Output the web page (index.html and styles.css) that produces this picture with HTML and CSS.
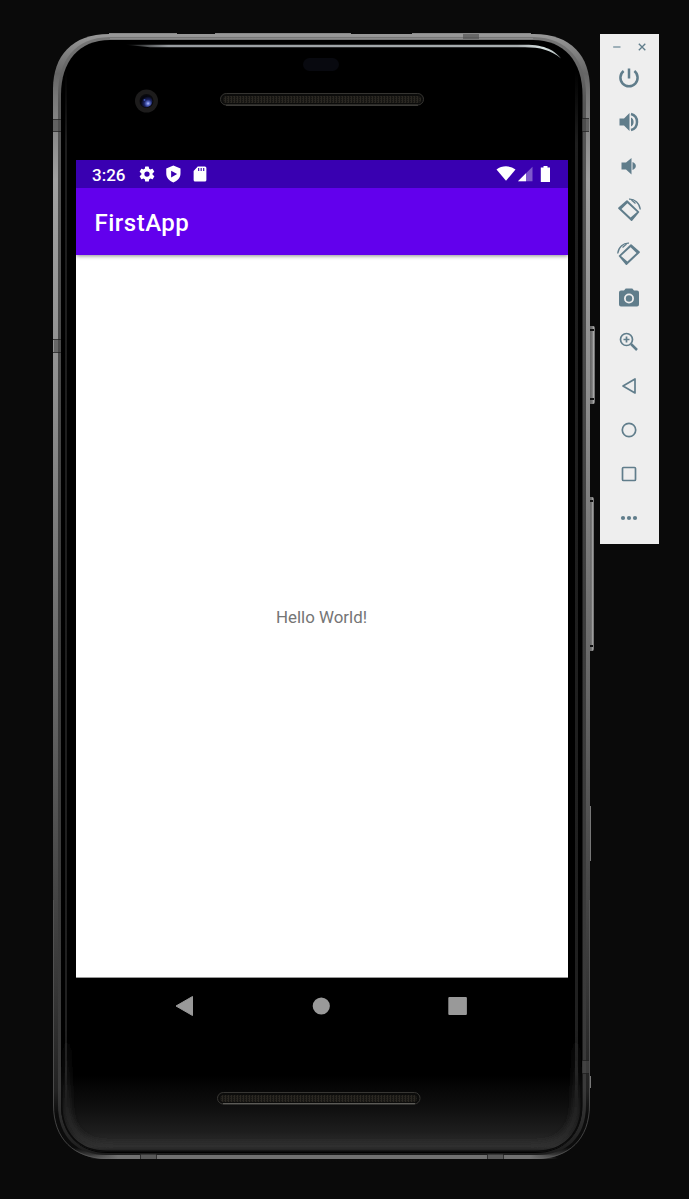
FILE: index.html
```html
<!DOCTYPE html>
<html lang="en">
<head>
<meta charset="utf-8">
<title>Android Emulator</title>
<link rel="stylesheet" href="styles.css">
</head>
<body>
<main class="desktop">
  <section class="phone">
    <svg class="frame" viewBox="53 33 545 1130" aria-hidden="true">
      <defs>
        <linearGradient id="rim" x1="0" y1="0" x2="0" y2="1">
          <stop offset="0" stop-color="#999"/><stop offset=".035" stop-color="#666"/>
          <stop offset=".055" stop-color="#777"/><stop offset=".13" stop-color="#a0a0a0"/>
          <stop offset=".32" stop-color="#8e8e8e"/><stop offset=".6" stop-color="#636363"/>
          <stop offset=".85" stop-color="#363636"/><stop offset=".94" stop-color="#222"/><stop offset=".96" stop-color="#0c0c0c"/>
          <stop offset=".99" stop-color="#0c0c0c"/><stop offset="1" stop-color="#555"/>
        </linearGradient>
        <linearGradient id="rimIn" x1="0" y1="0" x2="0" y2="1">
          <stop offset="0" stop-color="#777"/><stop offset=".06" stop-color="#555"/>
          <stop offset=".5" stop-color="#3c3c3c"/><stop offset=".94" stop-color="#3a3a3a"/><stop offset="1" stop-color="#1c1c1c"/>
        </linearGradient>
        <linearGradient id="base" x1="0" x2="1">
          <stop offset="0" stop-color="#666" stop-opacity="0"/><stop offset=".06" stop-color="#707070"/>
          <stop offset=".94" stop-color="#707070"/><stop offset="1" stop-color="#666" stop-opacity="0"/>
        </linearGradient>
        <linearGradient id="chin" x1="0" y1="0" x2="0" y2="1">
          <stop offset="0" stop-color="#000"/><stop offset=".45" stop-color="#101010"/>
          <stop offset=".75" stop-color="#1e1e1e"/><stop offset=".93" stop-color="#303030"/><stop offset="1" stop-color="#181818"/>
        </linearGradient>
        <linearGradient id="shine" gradientUnits="userSpaceOnUse" x1="125" y1="0" x2="561" y2="0">
          <stop offset="0" stop-color="#b4b9bc" stop-opacity="0"/><stop offset=".1" stop-color="#989ca0"/>
          <stop offset=".9" stop-color="#a9afb1"/><stop offset=".96" stop-color="#d8e2e2"/><stop offset="1" stop-color="#aab4b4"/>
        </linearGradient>
        <linearGradient id="key" x1="0" x2="1">
          <stop offset="0" stop-color="#555"/><stop offset=".6" stop-color="#777"/><stop offset=".8" stop-color="#aaa"/><stop offset="1" stop-color="#555"/>
        </linearGradient>
        <linearGradient id="fade" x1="0" y1="0" x2="0" y2="1">
          <stop offset="0" stop-color="#222" stop-opacity="0"/><stop offset=".07" stop-color="#222"/>
          <stop offset=".96" stop-color="#262626"/><stop offset="1" stop-color="#262626" stop-opacity="0"/>
        </linearGradient>
        <linearGradient id="cornerGlow" gradientUnits="userSpaceOnUse" x1="0" y1="1030" x2="0" y2="1110">
          <stop offset="0" stop-color="#2b2b2b" stop-opacity="0"/><stop offset="1" stop-color="#2d2d2d"/>
        </linearGradient>
        <radialGradient id="lens" cx=".65" cy=".68" r=".6">
          <stop offset="0" stop-color="#b3c0ff"/><stop offset=".25" stop-color="#5668c4"/>
          <stop offset=".55" stop-color="#1a2260"/><stop offset="1" stop-color="#05060f"/>
        </radialGradient>
        <pattern id="mesh" width="3" height="2" patternUnits="userSpaceOnUse">
          <rect width="3" height="2" fill="#171613"/><rect width="1" height="2" fill="#2b2822"/><rect x="2" width="1" height="1" fill="#24221e"/>
        </pattern>
        <filter id="soft" x="-10%" y="-10%" width="120%" height="120%"><feGaussianBlur stdDeviation="3"/></filter>
        <clipPath id="glassClip"><path d="M110 41H533Q582 41 582 96V1105C582 1133 565 1152 536 1152H107C78 1152 61 1133 61 1105V96Q61 41 110 41Z"/></clipPath>
      </defs>

      <!-- side keys -->
      <rect x="588" y="326" width="7" height="78" rx="2" fill="url(#key)"/>
      <path d="M590 330H594M590 399H594" stroke="#111" stroke-width="2"/>
      <rect x="588" y="497" width="6" height="154" rx="2" fill="url(#key)"/>
      <path d="M589 501H593M589 646H593" stroke="#111" stroke-width="2"/>
      <path d="M590.5 806V861M590.5 1076V1088" stroke="#777"/>

      <!-- metal rim -->
      <path d="M109 34C72 34 53 56 53 89V1105C53 1139 74 1159 107 1159H536C569 1159 590 1139 590 1105V89C590 56 571 34 534 34Z" fill="url(#rim)"/>
      <path d="M109 33.5H177M215 33.5H351M412 33.5H531" stroke="#888"/>
      <path d="M109 37C75 38 58 60 58 95V1105C58 1138 78 1155 107 1155H536C566 1155 586 1138 586 1105V95C586 60 567 38 534 37Z" fill="url(#rimIn)"/>
      <path d="M110 40C79 40 61 61 61 95V1105C61 1134 79 1153 108 1153H535C564 1153 582.500 1134 582.500 1105V95C582.500 61 564 40 533 40Z" fill="#000"/>
      <path d="M110 38.500H533" stroke="#8b8b8b"/>
      <path d="M53.500 900V1105C53.500 1139 74 1158.500 107 1158.500M536 1158.500C569 1158.500 589.500 1139 589.500 1105V900" fill="none" stroke="#5a5a5a" stroke-width=".7"/>
      <rect x="90" y="1155" width="468" height="4" fill="url(#base)"/>
      <path d="M53 120H61V131H53ZM54 340H61V352H54ZM582 119H589V131H582ZM463 34H479V39H463ZM582 1061H589V1073H582ZM140 1154H156V1159H140ZM487 1154H503V1159H487Z" fill="#4a4a4a" fill-opacity=".6"/>
      <path d="M53 119.500H61M53 131.500H61M53 339.500H61M53 352.500H61M582 118.500H589M582 131.500H589M582 1060.500H589M582 1073.500H589M140.500 1154V1159M156.500 1154V1159M487.500 1154V1159M503.500 1154V1159" stroke="#222" stroke-opacity=".8"/>

      <!-- glass -->
      <g clip-path="url(#glassClip)">
        <rect x="61" y="1075" width="521" height="77" fill="url(#chin)"/>
        <rect x="65" y="70" width="2" height="1046" fill="url(#fade)" opacity=".85"/>
        <rect x="575" y="70" width="3" height="1046" fill="url(#fade)" opacity=".85"/>
        <path d="M67 1030V1102C67 1130 81 1146 111 1146H533C562 1146 576 1130 576 1102V1030" fill="none" stroke="url(#cornerGlow)" stroke-width="5" filter="url(#soft)"/>
        <path d="M61 1090V1105C61 1133 78 1152 107 1152H536C565 1152 582 1133 582 1105V1090" fill="none" stroke="#0b0b0b" stroke-width="3"/>
      </g>
      <path d="M125 44.800H525C546 44.800 555 51 561 58.500C551 50 540 47.200 525 47.200H150Z" fill="url(#shine)"/>

      <!-- sensor, camera, speakers -->
      <rect x="303" y="58" width="36" height="13" rx="6.500" fill="#08090f"/>
      <circle cx="146.500" cy="101" r="11.500" fill="#1d1c1c"/>
      <circle cx="146.500" cy="101" r="7" fill="#0a0a0e"/>
      <circle cx="146.300" cy="101.300" r="6" fill="url(#lens)"/>
      <circle cx="144.500" cy="100" r="1" fill="#3d53b0"/>
      <rect x="220.500" y="93.500" width="203" height="11.500" rx="5.700" fill="#0c0c0b" stroke="#353431"/>
      <rect x="223" y="96" width="198" height="7" rx="3.500" fill="url(#mesh)"/>
      <path d="M226 105.200H418" stroke="#4a4946"/>
      <rect x="217.500" y="1092.500" width="202.500" height="11.500" rx="5.700" fill="#0c0c0b" stroke="#373633"/>
      <rect x="220" y="1095" width="197" height="7" rx="3.500" fill="url(#mesh)"/>
      <path d="M223 1103.700H415" stroke="#6a6966"/>
    </svg>

    <div class="screen">
      <header class="statusbar">
        <span class="clock">3:26</span>
        <svg class="status-icon" viewBox="0 0 24 24"><path d="M19.400 13a7.500 7.500 0 0 0 0-2l2.100-1.600a.5.500 0 0 0 .1-.6l-2-3.500a.5.500 0 0 0-.6-.2l-2.500 1a7.300 7.300 0 0 0-1.700-1L14.400 2.500a.5.500 0 0 0-.5-.5h-4a.5.500 0 0 0-.5.500L9.100 5.100a7.300 7.300 0 0 0-1.700 1l-2.500-1a.5.500 0 0 0-.6.200l-2 3.500a.5.500 0 0 0 .1.600L4.500 11a8 8 0 0 0 0 2l-2.100 1.600a.5.500 0 0 0-.1.600l2 3.500c.1.200.4.300.6.200l2.500-1a7.300 7.300 0 0 0 1.700 1l.4 2.600c0 .3.200.5.500.5h4c.2 0 .5-.2.500-.5l.4-2.600a7.300 7.300 0 0 0 1.700-1l2.500 1c.2.100.5 0 .6-.2l2-3.500a.5.500 0 0 0-.1-.6ZM12 15.500a3.500 3.500 0 1 1 0-7 3.500 3.500 0 0 1 0 7Z"/></svg>
        <svg class="status-icon" viewBox="0 0 24 24"><path fill-rule="evenodd" d="M12.500.8 3 4.500V11c0 6 4 10.300 9.500 12.300 5.500-2 9.500-6.300 9.500-12.300V4.500ZM9.500 7.500l8 4.500-8 4.500Z"/></svg>
        <svg class="status-icon card" viewBox="0 0 24 24"><path fill-rule="evenodd" d="M9 2H18.500a2 2 0 0 1 2 2V20a2 2 0 0 1-2 2H5.500a2 2 0 0 1-2-2V8ZM9.500 4V8H11V4ZM12.800 4V8H14.300V4ZM16.200 4V8H17.700V4Z"/></svg>
        <svg class="signals" viewBox="0 0 56 18"><path d="M.5 4.500C6 .3 14 .3 19.500 4.500L10 15.800Z"/><path d="M22 16.300 36.500 1.800V16.300Z" opacity=".35"/><path d="M22 16.300 30 8.300V16.300Z"/><path d="M44.800 2.500H47.500V1H51.500V2.500H54V17H44.800Z"/></svg>
      </header>
      <h1 class="appbar">FirstApp</h1>
      <div class="content">Hello World!</div>
      <nav class="navbar">
        <svg viewBox="0 0 20 20"><path d="M2 10 18.500.5V19.500Z" stroke="#999" stroke-linejoin="round"/></svg>
        <svg viewBox="0 0 20 20"><circle cx="10.300" cy="10" r="8.600"/></svg>
        <svg viewBox="0 0 20 20"><rect x=".3" y="1" width="18.600" height="18" rx="1"/></svg>
      </nav>
    </div>
  </section>

  <aside class="toolbar">
    <div class="window-controls">
      <svg viewBox="0 0 10 10"><path d="M1.200 5H8.500" stroke="#93a7b1" stroke-width="1.800"/></svg>
      <svg viewBox="0 0 10 10"><path d="M1.800 1.800 8.300 8.300M8.300 1.800 1.800 8.300" stroke="#607d8b" stroke-width="1.300"/></svg>
    </div>
    <svg class="tool" viewBox="0 0 24 24"><path class="line thick" d="M12 2.500V12.500M6.600 5A8.600 8.600 0 1 0 17.400 5"/></svg>
    <svg class="tool" viewBox="0 0 24 24"><path d="M2.500 8.500H7L12.500 3V21L7 15.500H2.500ZM14 7.500C17.500 9 17.500 15 14 16.500Z"/><path class="line thick" d="M14 4C22 6 22 18 14 20"/></svg>
    <svg class="tool" viewBox="0 0 24 24"><path d="M4.500 8.500H9L14.500 4V20.500L9 15.500H4.500ZM15.500 8C20 9.500 20 14.500 15.500 16Z"/></svg>
    <svg class="tool" viewBox="0 0 24 24"><g id="rotate"><path fill-rule="evenodd" d="M9.400 2.500Q10 2 10.600 2.500L22 13.400Q22.600 14 22 14.600L15.200 22.800Q14.600 23.400 14 22.800L1.300 10.700Q.8 10 1.400 9.400ZM10.400 5.200 4.500 11 13.600 19.500 20 13.900Z"/><path class="line arc" d="M12 1.200C17.500.8 22.500 5 23.300 11.500"/><path class="line arc" d="M14.500 2 18.500 5.500"/></g></svg>
    <svg class="tool mirrored" viewBox="0 0 24 24"><use href="#rotate"/></svg>
    <svg class="tool" viewBox="0 0 24 24"><path fill-rule="evenodd" d="M8.700 2.500H15.300L17 4.500H20A2 2 0 0 1 22 6.500V18.500A2 2 0 0 1 20 20.500H4A2 2 0 0 1 2 18.500V6.500A2 2 0 0 1 4 4.500H7ZM12 7.500A5 5 0 1 0 12 17.500 5 5 0 0 0 12 7.500Z"/><circle cx="12" cy="12.500" r="3.200"/></svg>
    <svg class="tool" viewBox="0 0 24 24"><path class="line" d="M9.500 6.500V12.500M6.500 9.500H12.500"/><circle class="line" cx="9.500" cy="9.500" r="6"/><path class="line thick" d="M14 14 20 20"/></svg>
    <svg class="tool" viewBox="0 0 24 24"><path class="line" d="M6 12 18 5V19Z"/></svg>
    <svg class="tool" viewBox="0 0 24 24"><circle class="line" cx="12" cy="12" r="6.700"/></svg>
    <svg class="tool" viewBox="0 0 24 24"><rect class="line" x="5.500" y="5.500" width="13" height="13" rx="1"/></svg>
    <svg class="tool" viewBox="0 0 24 24"><circle cx="6" cy="12" r="2.100"/><circle cx="12" cy="12" r="2.100"/><circle cx="18" cy="12" r="2.100"/></svg>
  </aside>
</main>
</body>
</html>
```

FILE: styles.css
```css
* { box-sizing: border-box; }
body {
  margin: 0;
  background: #0a0a0a;
  font-family: Roboto, "Liberation Sans", sans-serif;
}
svg { display: block; }
.desktop {
  display: flex;
  align-items: flex-start;
  gap: 10px;
  height: 1199px;
  padding: 33px 30px 0 53px;
}
.phone {
  position: relative;
  flex: none;
  width: 537px;
  height: 1126px;
  padding: 127px 22px 0 23px;
}
.frame {
  position: absolute;
  top: 0;
  left: 0;
  width: 545px;
  height: 1130px;
}
.screen {
  position: relative;
  display: flex;
  flex-direction: column;
  width: 492px;
  height: 874px;
}
.statusbar {
  display: flex;
  align-items: center;
  height: 28px;
  padding: 0 16px;
  background: #3900b1;
  color: #fff;
  fill: #fff;
}
.clock {
  width: 46px;
  padding-top: 1px;
  font-size: 17px;
  font-weight: 500;
  line-height: 28px;
}
.status-icon {
  width: 18px;
  height: 18px;
  margin-right: 8px;
}
.card { margin-left: .5px; }
.signals {
  width: 56px;
  height: 18px;
  margin-left: auto;
}
.appbar {
  position: relative;
  height: 67px;
  margin: 0;
  padding: 2px 18.500px 0;
  background: #6200ed;
  box-shadow: 0 1px 4px rgba(0, 0, 0, .45);
  clip-path: inset(0 0 -10px 0);
  color: #fff;
  font-size: 24px;
  font-weight: 500;
  letter-spacing: .5px;
  line-height: 67px;
}
.content {
  display: flex;
  align-items: center;
  justify-content: center;
  height: 723px;
  padding: 1px 1px 0 0;
  border-bottom: 1px solid #999;
  background: #fff;
  color: #757575;
  font-size: 16.900px;
}
.navbar {
  display: flex;
  align-items: center;
  gap: 117px;
  height: 56px;
  padding-left: 98px;
  fill: #999;
}
.navbar svg { width: 20px; height: 20px; }
.toolbar {
  flex: none;
  display: flex;
  flex-direction: column;
  align-items: center;
  gap: 20px;
  width: 59px;
  height: 510px;
  margin-top: 1px;
  padding-right: 1px;
  background: #eee;
  fill: #607d8b;
}
.window-controls {
  display: flex;
  gap: 15px;
  height: 12px;
  padding: 8px 0 0 1px;
}
.window-controls svg { width: 10px; height: 10px; }
.tool { flex: none; width: 24px; height: 24px; }
.line { fill: none; stroke: #607d8b; stroke-width: 1.7; stroke-linejoin: round; }
.thick { stroke-width: 2.5; }
.arc { stroke-width: 1.3; }
.mirrored { transform: scaleX(-1); }
```
